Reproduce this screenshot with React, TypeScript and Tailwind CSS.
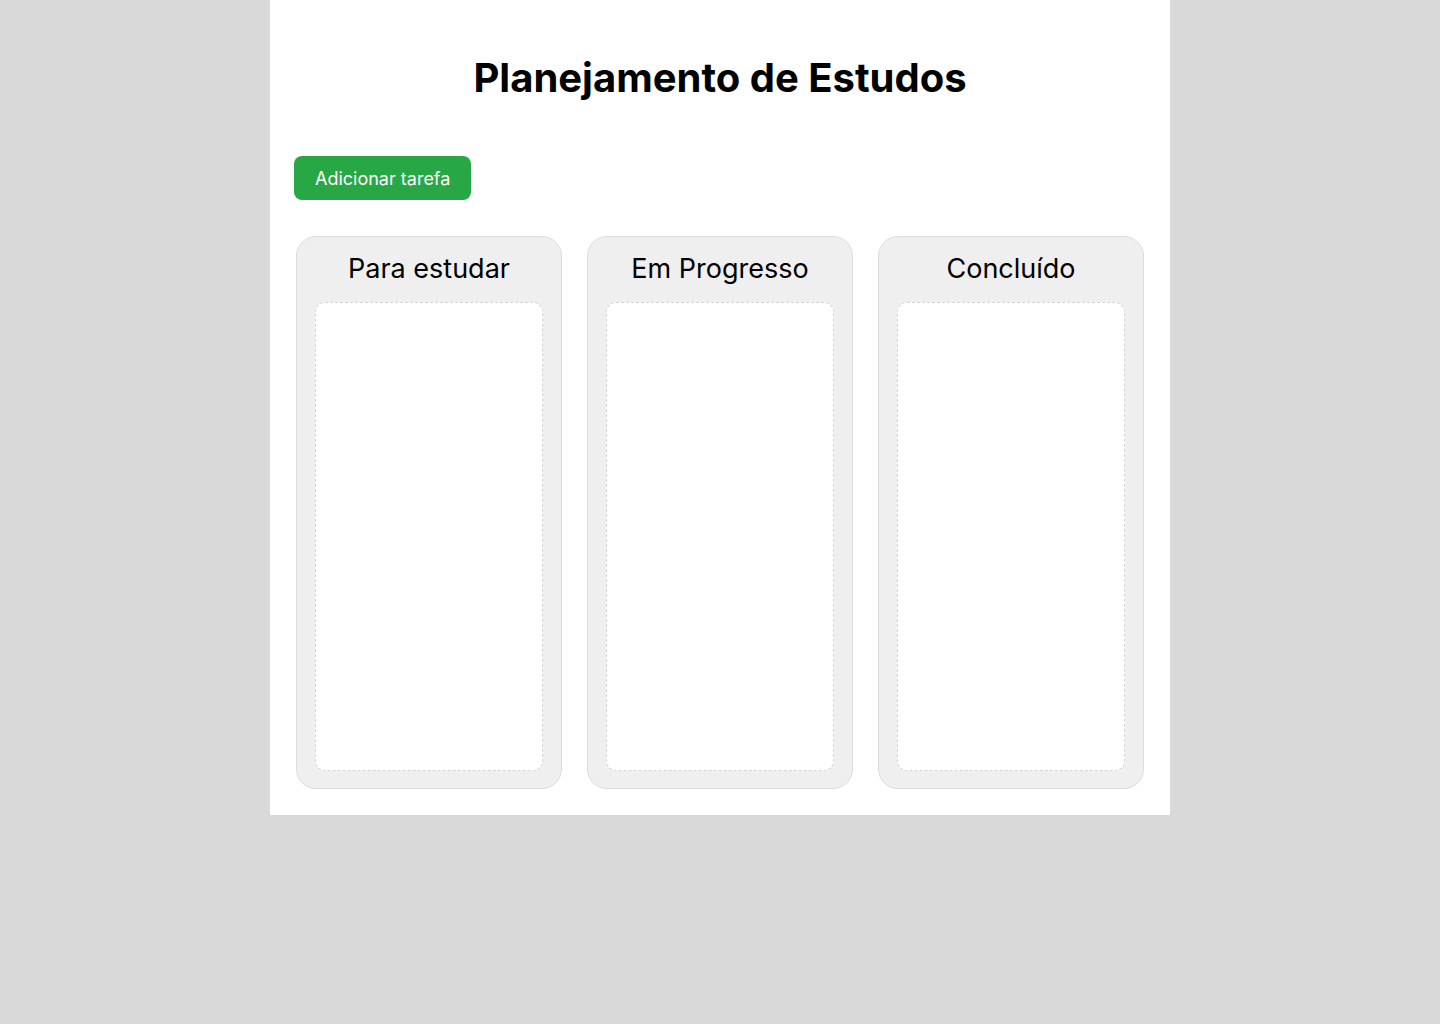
const columns = ['Para estudar', 'Em Progresso', 'Concluído'];

export default function App() {
  return (
    <div className="min-h-screen bg-[#d9d9d9] font-['Inter','Liberation_Sans',sans-serif]">
      <div className="mx-auto w-[900px] bg-white px-6 pb-[26px]">
        <h1 className="pt-[54px] text-center text-[40px] font-bold leading-[48px] text-black">
          Planejamento de Estudos
        </h1>

        <button className="mt-[54px] h-[44px] rounded-lg bg-[#28a745] px-[21px] text-[18px] text-white">
          Adicionar tarefa
        </button>

        <div className="mt-[36px] flex justify-center gap-[25px]">
          {columns.map((title) => (
            <div
              key={title}
              className="flex h-[553px] w-[266px] flex-col rounded-[20px] border border-[#dcdcdc] bg-[#efefef] px-[18px] pb-[17px]"
            >
              <h2 className="pt-[15px] text-center text-[27px] leading-[34px] text-black">{title}</h2>
              <div className="mt-[16px] flex-1 rounded-[10px] border border-dashed border-[#d4d4d4] bg-white" />
            </div>
          ))}
        </div>
      </div>
    </div>
  );
}
